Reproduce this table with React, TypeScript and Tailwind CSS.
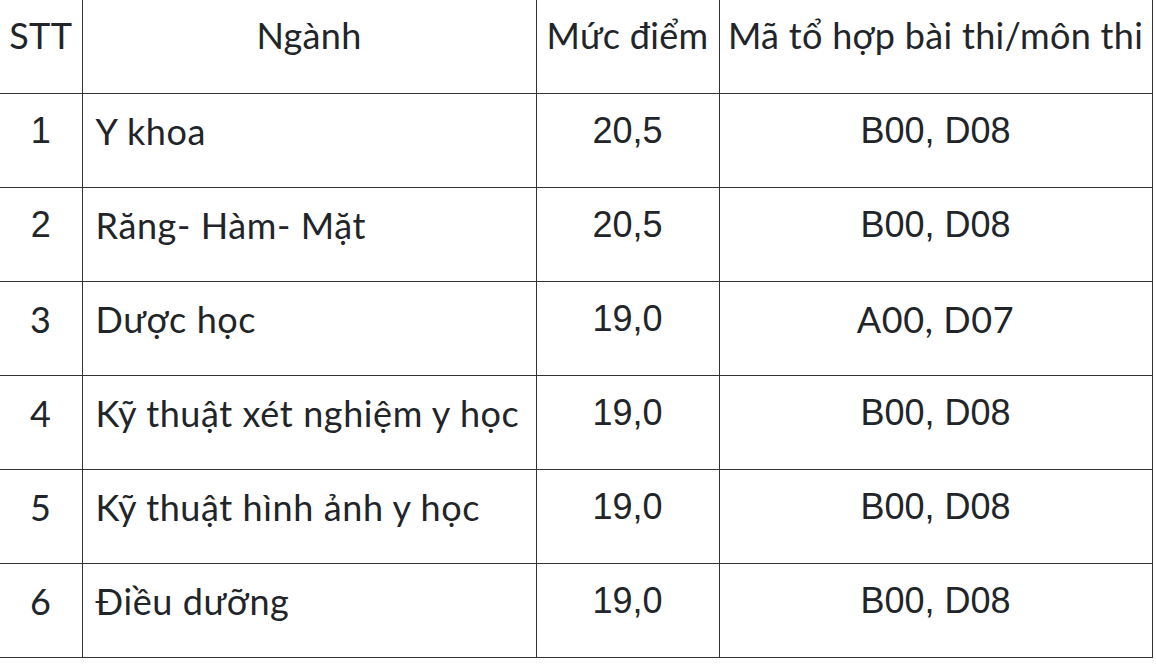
import React from 'react';

interface Row {
    stt: string;
    nganh: string;
    diem: string;
    maToHop: string;
    sttArial?: boolean;
    maArial?: boolean;
}

const ROWS: Row[] = [
    { stt: '1', nganh: 'Y khoa', diem: '20,5', maToHop: 'B00, D08', sttArial: true, maArial: true },
    { stt: '2', nganh: 'Răng- Hàm- Mặt', diem: '20,5', maToHop: 'B00, D08', sttArial: true, maArial: true },
    { stt: '3', nganh: 'Dược học', diem: '19,0', maToHop: 'A00, D07' },
    { stt: '4', nganh: 'Kỹ thuật xét nghiệm y học', diem: '19,0', maToHop: 'B00, D08', maArial: true },
    { stt: '5', nganh: 'Kỹ thuật hình ảnh y học', diem: '19,0', maToHop: 'B00, D08', maArial: true },
    { stt: '6', nganh: 'Điều dưỡng', diem: '19,0', maToHop: 'B00, D08', maArial: true },
];

const MAIN = "font-['Lato','Noto_Sans',sans-serif] tracking-[0.6px]";
const ARIAL = "font-['Liberation_Sans',Arial,sans-serif] tracking-normal";

export default function App() {
    return (
        <div className="w-[1156px] h-[664px] bg-white overflow-hidden text-[#212529]">
            <table className={`table-fixed border-collapse w-[1152px] text-[36px] leading-[54px] ${MAIN}`}>
                <colgroup>
                    <col className="w-[82px]" />
                    <col className="w-[454px]" />
                    <col className="w-[183px]" />
                    <col className="w-[433px]" />
                </colgroup>
                <thead>
                    <tr className="h-[93px] tracking-[0.3px]">
                        <th className="font-normal align-top pt-[8px] text-center border-r border-b border-[#333]">STT</th>
                        <th className="font-normal align-top pt-[8px] text-center border-x border-b border-[#333]">Ngành</th>
                        <th className="font-normal align-top pt-[8px] text-center border-x border-b border-[#333] whitespace-nowrap">Mức điểm</th>
                        <th className="font-normal align-top pt-[8px] text-center border-x border-b border-[#333] whitespace-nowrap">Mã tổ hợp bài thi/môn thi</th>
                    </tr>
                </thead>
                <tbody>
                    {ROWS.map(r => (
                        <tr key={r.stt} className="h-[94px]">
                            <td className={`align-top pt-[10px] text-center border-r border-b border-[#333] ${r.sttArial ? ARIAL : ''}`}>{r.stt}</td>
                            <td className="align-top pt-[10px] pl-[13px] whitespace-nowrap border border-[#333]">{r.nganh}</td>
                            <td className={`align-top pt-[10px] text-center border border-[#333] ${ARIAL}`}>{r.diem}</td>
                            <td className={`align-top pt-[10px] text-center border border-[#333] ${r.maArial ? ARIAL : ''}`}>{r.maToHop}</td>
                        </tr>
                    ))}
                </tbody>
            </table>
        </div>
    );
}
